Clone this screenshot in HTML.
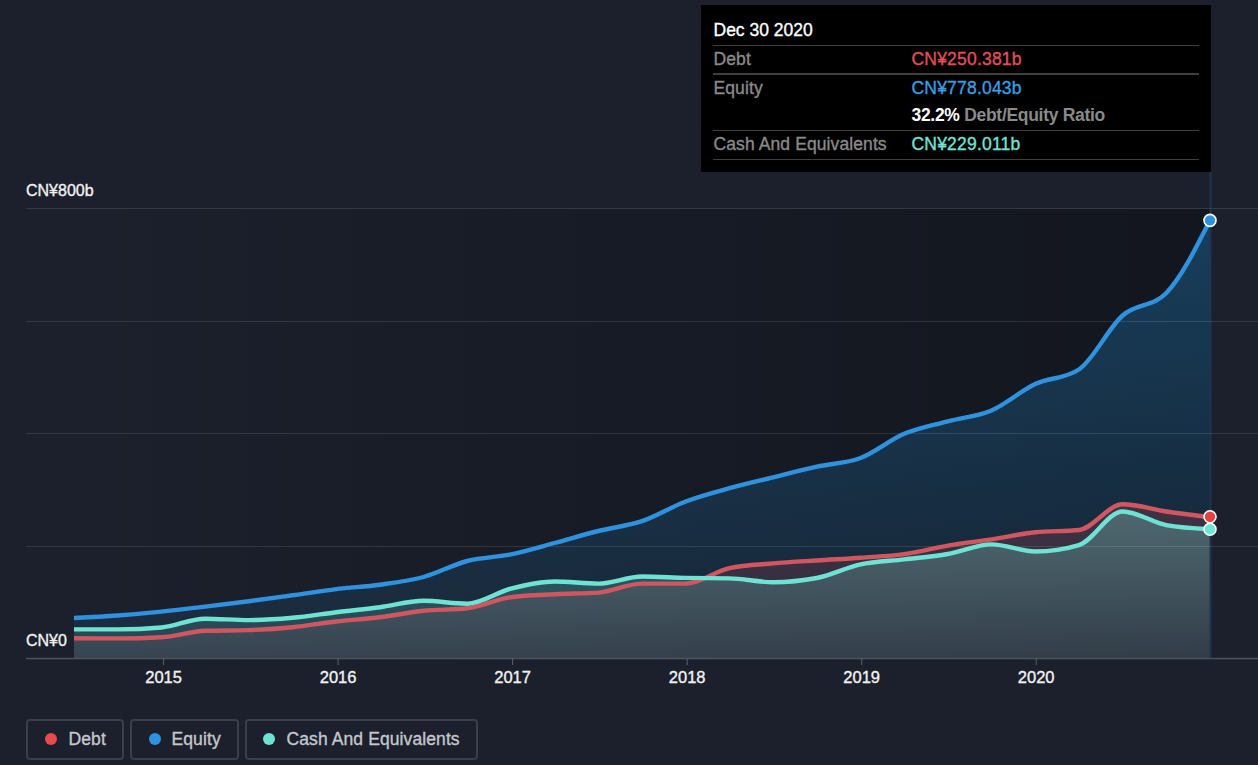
<!DOCTYPE html>
<html><head><meta charset="utf-8">
<style>
html,body{margin:0;padding:0;}
body{width:1258px;height:765px;background:#1b202c;overflow:hidden;position:relative;font-family:"Liberation Sans",sans-serif;}
.t{position:absolute;white-space:nowrap;line-height:1;-webkit-text-stroke:0.35px currentColor;}
.ylab{color:#f2f2f2;font-size:16px;-webkit-text-stroke:0.35px currentColor;}
.xlab{color:#f2f2f2;font-size:16.5px;-webkit-text-stroke:0.35px currentColor;}
#tip{position:absolute;left:701px;top:5px;width:510px;height:166.5px;background:#000;}
.sep{position:absolute;left:12px;width:486px;height:1.5px;background:#3f3f3f;}
.tl{color:#8a8a8a;font-size:17.5px;letter-spacing:0.1px;}
.tv{font-size:17.5px;letter-spacing:0.2px;}
.leg{position:absolute;top:718.5px;height:37px;border:2px solid #3a3f49;border-radius:4px;}
.dot{position:absolute;width:12.5px;height:12.5px;border-radius:50%;top:12.2px;}
.lt{color:#c4c7cc;font-size:17.5px;letter-spacing:0.1px;}
</style></head><body>
<svg width="1258" height="765" viewBox="0 0 1258 765" style="position:absolute;left:0;top:0">
<defs>
<linearGradient id="shade" x1="0" y1="0" x2="1" y2="0">
<stop offset="0" stop-color="#000" stop-opacity="0"/>
<stop offset="1" stop-color="#000" stop-opacity="0.32"/>
</linearGradient>
<linearGradient id="eqg" x1="0" y1="0" x2="0" y2="1">
<stop offset="0" stop-color="#2394df" stop-opacity="0.32"/>
<stop offset="1" stop-color="#2394df" stop-opacity="0.09"/>
</linearGradient>
<linearGradient id="deg" x1="0" y1="0" x2="0" y2="1">
<stop offset="0" stop-color="#e64c5c" stop-opacity="0.2"/>
<stop offset="1" stop-color="#e64c5c" stop-opacity="0.1"/>
</linearGradient>
<linearGradient id="cashg" x1="0" y1="0" x2="0" y2="1">
<stop offset="0" stop-color="#71e7d6" stop-opacity="0.3"/>
<stop offset="1" stop-color="#71e7d6" stop-opacity="0.12"/>
</linearGradient>
</defs>

<rect x="74" y="209" width="1136" height="449" fill="url(#shade)"/>
<path d="M74.0,618.0C88.6,617.3 103.1,616.6 117.7,615.5C132.3,614.4 146.8,613.1 161.4,611.6C175.9,610.1 190.5,608.3 205.1,606.6C219.6,604.9 234.2,603.2 248.8,601.3C263.3,599.4 277.9,597.3 292.5,595.3C307.0,593.3 321.6,590.9 336.2,589.1C350.7,587.3 365.3,586.7 379.8,584.7C394.4,582.7 409.0,581.0 423.5,577.0C438.1,573.0 452.7,564.8 467.2,561.0C481.8,557.2 496.4,557.4 510.9,554.4C525.5,551.4 540.1,546.9 554.6,543.0C569.2,539.1 583.7,534.6 598.3,531.0C612.9,527.4 627.4,526.1 642.0,521.2C656.6,516.3 671.1,507.0 685.7,501.5C700.3,496.0 714.8,492.2 729.4,488.2C743.9,484.2 758.5,480.9 773.1,477.3C787.6,473.7 802.2,469.9 816.8,466.7C831.3,463.5 845.9,463.5 860.5,458.0C875.0,452.5 889.6,439.9 904.2,433.8C918.7,427.7 933.3,425.2 947.8,421.3C962.4,417.4 977.0,416.6 991.5,410.4C1006.1,404.2 1020.7,390.8 1035.2,384.0C1049.8,377.2 1064.4,379.2 1078.9,369.5C1093.5,359.8 1108.1,328.2 1122.6,315.5C1137.2,302.7 1151.7,308.0 1166.3,293.0C1180.9,278.0 1195.4,249.2 1210.0,220.4L1210.0,658L74.0,658Z" fill="url(#eqg)"/>
<path d="M74.0,638.2C88.6,638.3 103.1,638.4 117.7,638.4C132.3,638.4 146.8,638.0 161.4,637.2C175.9,636.4 190.5,631.3 205.1,630.8C219.6,630.3 234.2,630.6 248.8,630.1C263.3,629.6 277.9,628.6 292.5,627.2C307.0,625.8 321.6,623.1 336.2,621.5C350.7,619.9 365.3,619.1 379.8,617.3C394.4,615.5 409.0,612.3 423.5,610.8C438.1,609.3 452.7,610.0 467.2,608.3C481.8,606.6 496.4,599.2 510.9,597.2C525.5,595.2 540.1,595.0 554.6,594.2C569.2,593.4 583.7,593.7 598.3,592.6C612.9,591.5 627.4,583.6 642.0,583.6C656.6,583.6 671.1,583.6 685.7,583.6C700.3,583.6 714.8,571.4 729.4,568.2C743.9,565.0 758.5,564.7 773.1,563.4C787.6,562.1 802.2,561.4 816.8,560.5C831.3,559.5 845.9,558.8 860.5,557.7C875.0,556.6 889.6,556.1 904.2,554.1C918.7,552.1 933.3,548.1 947.8,545.6C962.4,543.1 977.0,541.6 991.5,539.4C1006.1,537.2 1020.7,533.7 1035.2,532.2C1049.8,530.7 1064.4,531.5 1078.9,530.0C1093.5,528.5 1108.1,504.3 1122.6,504.3C1137.2,504.3 1151.7,509.3 1166.3,511.5C1180.9,513.6 1195.4,515.4 1210.0,517.2L1210.0,658L74.0,658Z" fill="url(#deg)"/>
<path d="M74.0,629.4C88.6,629.4 103.1,629.4 117.7,629.4C132.3,629.4 146.8,628.8 161.4,627.5C175.9,626.2 190.5,618.7 205.1,618.7C219.6,618.7 234.2,620.1 248.8,620.1C263.3,620.1 277.9,619.1 292.5,617.8C307.0,616.5 321.6,614.0 336.2,612.2C350.7,610.4 365.3,609.1 379.8,607.2C394.4,605.3 409.0,600.8 423.5,600.8C438.1,600.8 452.7,603.7 467.2,603.7C481.8,603.7 496.4,592.3 510.9,588.6C525.5,584.9 540.1,581.5 554.6,581.5C569.2,581.5 583.7,583.6 598.3,583.6C612.9,583.6 627.4,576.5 642.0,576.5C656.6,576.5 671.1,577.6 685.7,577.9C700.3,578.2 714.8,578.1 729.4,578.4C743.9,578.7 758.5,582.2 773.1,582.2C787.6,582.2 802.2,580.8 816.8,578.0C831.3,575.2 845.9,567.5 860.5,564.4C875.0,561.3 889.6,561.1 904.2,559.4C918.7,557.7 933.3,556.5 947.8,554.0C962.4,551.5 977.0,544.4 991.5,544.4C1006.1,544.4 1020.7,551.5 1035.2,551.5C1049.8,551.5 1064.4,549.4 1078.9,545.1C1093.5,540.8 1108.1,511.5 1122.6,511.5C1137.2,511.5 1151.7,522.4 1166.3,525.1C1180.9,527.8 1195.4,528.5 1210.0,529.2L1210.0,658L74.0,658Z" fill="url(#cashg)"/>
<rect x="1209.5" y="171.5" width="2" height="486.5" fill="#1e3252"/>
<rect x="26" y="208" width="1232" height="1" fill="#fff" fill-opacity="0.11"/>
<rect x="26" y="321" width="1232" height="1" fill="#fff" fill-opacity="0.11"/>
<rect x="26" y="433" width="1232" height="1" fill="#fff" fill-opacity="0.11"/>
<rect x="26" y="546" width="1232" height="1" fill="#fff" fill-opacity="0.11"/>
<path d="M74.0,638.2C88.6,638.3 103.1,638.4 117.7,638.4C132.3,638.4 146.8,638.0 161.4,637.2C175.9,636.4 190.5,631.3 205.1,630.8C219.6,630.3 234.2,630.6 248.8,630.1C263.3,629.6 277.9,628.6 292.5,627.2C307.0,625.8 321.6,623.1 336.2,621.5C350.7,619.9 365.3,619.1 379.8,617.3C394.4,615.5 409.0,612.3 423.5,610.8C438.1,609.3 452.7,610.0 467.2,608.3C481.8,606.6 496.4,599.2 510.9,597.2C525.5,595.2 540.1,595.0 554.6,594.2C569.2,593.4 583.7,593.7 598.3,592.6C612.9,591.5 627.4,583.6 642.0,583.6C656.6,583.6 671.1,583.6 685.7,583.6C700.3,583.6 714.8,571.4 729.4,568.2C743.9,565.0 758.5,564.7 773.1,563.4C787.6,562.1 802.2,561.4 816.8,560.5C831.3,559.5 845.9,558.8 860.5,557.7C875.0,556.6 889.6,556.1 904.2,554.1C918.7,552.1 933.3,548.1 947.8,545.6C962.4,543.1 977.0,541.6 991.5,539.4C1006.1,537.2 1020.7,533.7 1035.2,532.2C1049.8,530.7 1064.4,531.5 1078.9,530.0C1093.5,528.5 1108.1,504.3 1122.6,504.3C1137.2,504.3 1151.7,509.3 1166.3,511.5C1180.9,513.6 1195.4,515.4 1210.0,517.2" fill="none" stroke="#d0565f" stroke-width="4.4" stroke-linejoin="round"/>
<path d="M74.0,629.4C88.6,629.4 103.1,629.4 117.7,629.4C132.3,629.4 146.8,628.8 161.4,627.5C175.9,626.2 190.5,618.7 205.1,618.7C219.6,618.7 234.2,620.1 248.8,620.1C263.3,620.1 277.9,619.1 292.5,617.8C307.0,616.5 321.6,614.0 336.2,612.2C350.7,610.4 365.3,609.1 379.8,607.2C394.4,605.3 409.0,600.8 423.5,600.8C438.1,600.8 452.7,603.7 467.2,603.7C481.8,603.7 496.4,592.3 510.9,588.6C525.5,584.9 540.1,581.5 554.6,581.5C569.2,581.5 583.7,583.6 598.3,583.6C612.9,583.6 627.4,576.5 642.0,576.5C656.6,576.5 671.1,577.6 685.7,577.9C700.3,578.2 714.8,578.1 729.4,578.4C743.9,578.7 758.5,582.2 773.1,582.2C787.6,582.2 802.2,580.8 816.8,578.0C831.3,575.2 845.9,567.5 860.5,564.4C875.0,561.3 889.6,561.1 904.2,559.4C918.7,557.7 933.3,556.5 947.8,554.0C962.4,551.5 977.0,544.4 991.5,544.4C1006.1,544.4 1020.7,551.5 1035.2,551.5C1049.8,551.5 1064.4,549.4 1078.9,545.1C1093.5,540.8 1108.1,511.5 1122.6,511.5C1137.2,511.5 1151.7,522.4 1166.3,525.1C1180.9,527.8 1195.4,528.5 1210.0,529.2" fill="none" stroke="#6fe3d3" stroke-width="4.4" stroke-linejoin="round"/>
<path d="M74.0,618.0C88.6,617.3 103.1,616.6 117.7,615.5C132.3,614.4 146.8,613.1 161.4,611.6C175.9,610.1 190.5,608.3 205.1,606.6C219.6,604.9 234.2,603.2 248.8,601.3C263.3,599.4 277.9,597.3 292.5,595.3C307.0,593.3 321.6,590.9 336.2,589.1C350.7,587.3 365.3,586.7 379.8,584.7C394.4,582.7 409.0,581.0 423.5,577.0C438.1,573.0 452.7,564.8 467.2,561.0C481.8,557.2 496.4,557.4 510.9,554.4C525.5,551.4 540.1,546.9 554.6,543.0C569.2,539.1 583.7,534.6 598.3,531.0C612.9,527.4 627.4,526.1 642.0,521.2C656.6,516.3 671.1,507.0 685.7,501.5C700.3,496.0 714.8,492.2 729.4,488.2C743.9,484.2 758.5,480.9 773.1,477.3C787.6,473.7 802.2,469.9 816.8,466.7C831.3,463.5 845.9,463.5 860.5,458.0C875.0,452.5 889.6,439.9 904.2,433.8C918.7,427.7 933.3,425.2 947.8,421.3C962.4,417.4 977.0,416.6 991.5,410.4C1006.1,404.2 1020.7,390.8 1035.2,384.0C1049.8,377.2 1064.4,379.2 1078.9,369.5C1093.5,359.8 1108.1,328.2 1122.6,315.5C1137.2,302.7 1151.7,308.0 1166.3,293.0C1180.9,278.0 1195.4,249.2 1210.0,220.4" fill="none" stroke="#2f92de" stroke-width="4.4" stroke-linejoin="round"/>
<rect x="26" y="657.8" width="1232" height="1.5" fill="#4d535c"/>
<rect x="163.1" y="658" width="1" height="7" fill="#5a606a"/>
<rect x="337.6" y="658" width="1" height="7" fill="#5a606a"/>
<rect x="512.1" y="658" width="1" height="7" fill="#5a606a"/>
<rect x="686.7" y="658" width="1" height="7" fill="#5a606a"/>
<rect x="861.2" y="658" width="1" height="7" fill="#5a606a"/>
<rect x="1035.7" y="658" width="1" height="7" fill="#5a606a"/>
<circle cx="1210" cy="220.4" r="6" fill="#2f92de" stroke="#fff" stroke-width="1.6"/>
<circle cx="1210" cy="516.8" r="6" fill="#e8413f" stroke="#fff" stroke-width="1.6"/>
<circle cx="1210" cy="529.2" r="6" fill="#6ee6d6" stroke="#fff" stroke-width="1.6"/>
</svg>
<div class="t ylab" style="left:26px;top:183px;">CN¥800b</div>
<div class="t ylab" style="left:26px;top:633px;">CN¥0</div>
<div class="t xlab" style="left:123.6px;width:80px;text-align:center;top:669px;">2015</div>
<div class="t xlab" style="left:298.1px;width:80px;text-align:center;top:669px;">2016</div>
<div class="t xlab" style="left:472.6px;width:80px;text-align:center;top:669px;">2017</div>
<div class="t xlab" style="left:647.2px;width:80px;text-align:center;top:669px;">2018</div>
<div class="t xlab" style="left:821.7px;width:80px;text-align:center;top:669px;">2019</div>
<div class="t xlab" style="left:996.2px;width:80px;text-align:center;top:669px;">2020</div>
<div id="tip">
<div class="t" style="left:12.5px;top:17px;color:#fff;font-size:17.5px;">Dec 30 2020</div>
<div class="sep" style="top:39.5px"></div>
<div class="t tl" style="left:12.5px;top:46px;">Debt</div>
<div class="t tv" style="left:210.5px;top:46px;color:#e0505a;">CN¥250.381b</div>
<div class="sep" style="top:68px"></div>
<div class="t tl" style="left:12.5px;top:74.5px;">Equity</div>
<div class="t tv" style="left:210.5px;top:74.5px;color:#3a9fe0;">CN¥778.043b</div>
<div class="t tv" style="left:210.5px;top:102px;font-weight:bold;letter-spacing:-0.3px;-webkit-text-stroke:0;"><span style="color:#fff">32.2%</span> <span style="color:#8a8a8a">Debt/Equity Ratio</span></div>
<div class="sep" style="top:124.5px"></div>
<div class="t tl" style="left:12.5px;top:131px;">Cash And Equivalents</div>
<div class="t tv" style="left:210.5px;top:131px;color:#72e3d2;">CN¥229.011b</div>
<div class="sep" style="top:153.5px"></div>
</div>
<div class="leg" style="left:26px;width:94px;"><div class="dot" style="left:16.8px;background:#e84a4f"></div><div class="t lt" style="left:40.5px;top:10.5px;">Debt</div></div>
<div class="leg" style="left:130px;width:104.5px;"><div class="dot" style="left:16.8px;background:#2f92de"></div><div class="t lt" style="left:39.5px;top:10.5px;">Equity</div></div>
<div class="leg" style="left:245px;width:229px;"><div class="dot" style="left:15.5px;background:#6fe3d3"></div><div class="t lt" style="left:39.5px;top:10.5px;">Cash And Equivalents</div></div>
</body></html>
